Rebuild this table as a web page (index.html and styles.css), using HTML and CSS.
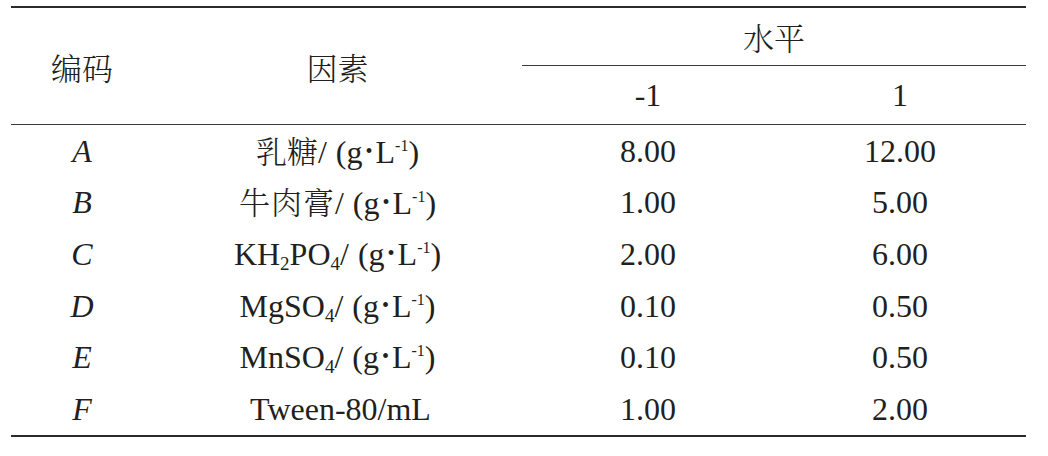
FILE: index.html
```html
<!DOCTYPE html>
<html>
<head>
<meta charset="utf-8">
<link rel="stylesheet" href="styles.css">
</head>
<body>
<table class="tbl">
  <colgroup>
    <col class="c1"><col class="c2"><col class="c3"><col class="c4">
  </colgroup>
  <thead>
    <tr class="h1">
      <th rowspan="2" class="cn head-bottom">编码</th>
      <th rowspan="2" class="cn head-bottom">因素</th>
      <th colspan="2" class="cn level">水平</th>
    </tr>
    <tr class="h2">
      <th class="head-bottom">-1</th>
      <th class="head-bottom">1</th>
    </tr>
  </thead>
  <tbody>
    <tr><td class="code">A</td><td><span class="cn">乳糖</span>/<span class="par">(</span>g<span class="dot">•</span>L<sup>-1</sup>)</td><td>8.00</td><td>12.00</td></tr>
    <tr><td class="code">B</td><td><span class="cn sp">牛肉膏</span>/<span class="par">(</span>g<span class="dot">•</span>L<sup>-1</sup>)</td><td>1.00</td><td>5.00</td></tr>
    <tr><td class="code">C</td><td>KH<sub>2</sub>PO<sub>4</sub>/<span class="par">(</span>g<span class="dot">•</span>L<sup>-1</sup>)</td><td>2.00</td><td>6.00</td></tr>
    <tr><td class="code">D</td><td>MgSO<sub>4</sub>/<span class="par">(</span>g<span class="dot">•</span>L<sup>-1</sup>)</td><td>0.10</td><td>0.50</td></tr>
    <tr><td class="code">E</td><td>MnSO<sub>4</sub>/<span class="par">(</span>g<span class="dot">•</span>L<sup>-1</sup>)</td><td>0.10</td><td>0.50</td></tr>
    <tr class="last"><td class="code">F</td><td class="tween">Tween-80/mL</td><td>1.00</td><td>2.00</td></tr>
  </tbody>
</table>
</body>
</html>
```

FILE: styles.css
```css
html, body {
  margin: 0;
  padding: 0;
  background: #ffffff;
}
body {
  font-family: "Liberation Serif", "Times New Roman", serif;
  color: #231f20;
}
.tbl {
  margin: 6px 0 0 11px;
  border-collapse: collapse;
  table-layout: fixed;
  width: 1015px;
  font-size: 32px;
  border-top: 2px solid #2b2b2b;
  border-bottom: 2px solid #2b2b2b;
}
.c1 { width: 142px; }
.c2 { width: 369px; }
.c3 { width: 252px; }
.c4 { width: 252px; }
th, td {
  padding: 0;
  text-align: center;
  vertical-align: middle;
  font-family: "Liberation Serif", "Times New Roman", serif;
  font-weight: normal;
  line-height: 1;
  white-space: nowrap;
}
.h1 th { height: 57px; }
.h2 th { height: 58px; }
.level { border-bottom: 1px solid #3a3a3a; }
.head-bottom { border-bottom: 1px solid #3a3a3a; }
tbody td { height: 51.6px; }
th.cn, .cn {
  font-family: "Noto Serif CJK SC", "Noto Sans CJK SC", "Liberation Serif", sans-serif;
  font-weight: 300;
  font-size: 31px;
}
.sp { letter-spacing: 1px; }
.code { font-style: italic; }
.par { margin-left: 9px; }
.dot {
  display: inline-block;
  font-size: 20px;
  vertical-align: 5px;
  margin: 0 3px;
}
sup {
  font-size: 16px;
  vertical-align: 12px;
  line-height: 0;
}
sub {
  font-size: 19px;
  vertical-align: -5px;
  line-height: 0;
}
.tween { padding-left: 6px; }
```
